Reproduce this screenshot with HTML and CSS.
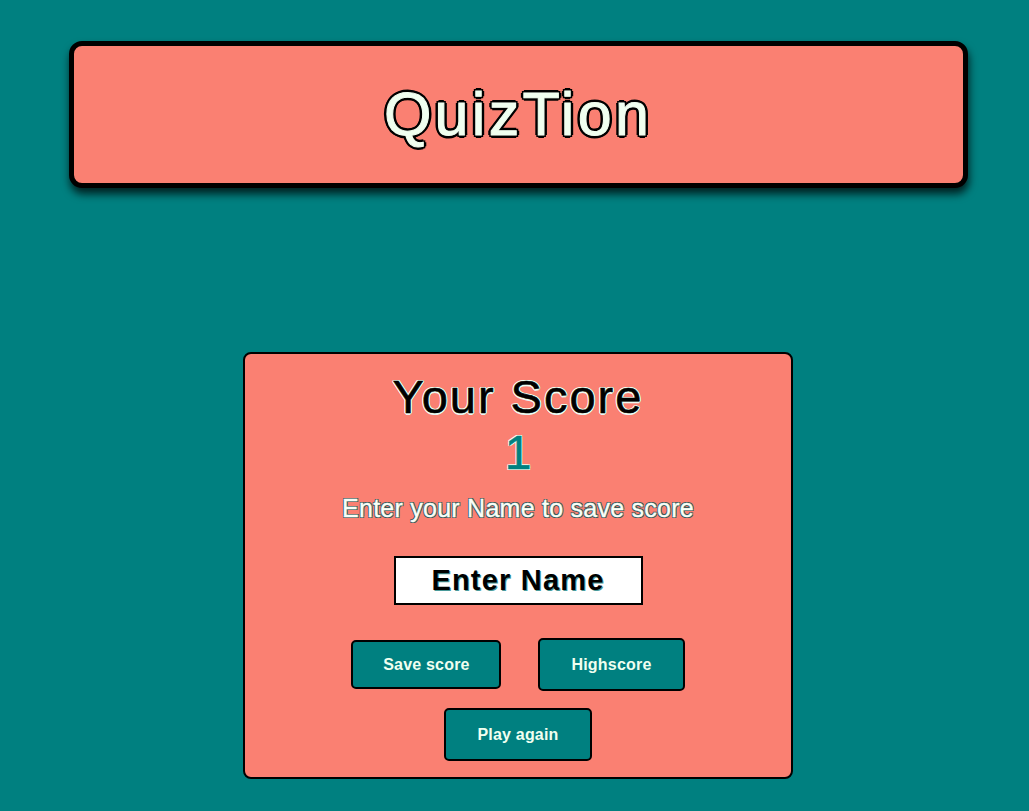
FILE: index.html
```html
<!DOCTYPE html>
<html lang="en">
<head>
<meta charset="utf-8">
<title>QuizTion</title>
<link rel="stylesheet" href="styles.css">
</head>
<body>
  <header class="banner">
    <h1 class="banner-title">QuizTion</h1>
  </header>
  <main class="card">
    <h2 class="score-title">Your Score</h2>
    <div class="score-value">1</div>
    <p class="score-hint">Enter your Name to save score</p>
    <input class="name-input" type="text" placeholder="Enter Name">
    <div class="btn-row">
      <button class="btn btn-save">Save score</button>
      <button class="btn">Highscore</button>
    </div>
    <div class="btn-row btn-row-last">
      <button class="btn">Play again</button>
    </div>
  </main>
</body>
</html>
```
FILE: styles.css
```css
html, body {
  margin: 0;
  padding: 0;
}
body {
  background: #008080;
  font-family: "Liberation Sans", Arial, sans-serif;
  min-height: 811px;
  padding: 41px 0 0 7px;
  box-sizing: border-box;
}
.banner {
  width: 899px;
  height: 147px;
  margin: 0 auto;
  box-sizing: border-box;
  background: #fa8072;
  border: 5px solid #000;
  border-radius: 13px;
  box-shadow: 1px 6px 8px rgba(0, 0, 0, 0.75);
  display: flex;
  align-items: center;
  justify-content: center;
}
.banner-title {
  margin: 0;
  font-size: 61px;
  font-weight: normal;
  line-height: 1;
  letter-spacing: 3.3px;
  color: #f0fff0;
  padding-top: 0;
  -webkit-text-stroke: 1px #f0fff0;
  text-shadow:
    -2px -2px 0 #000, 2px -2px 0 #000, -2px 2px 0 #000, 2px 2px 0 #000,
    0 -2px 0 #000, 0 2px 0 #000, -2px 0 0 #000, 2px 0 0 #000,
    0 -3px 0 #000, 0 3px 0 #000, -3px 0 0 #000, 3px 0 0 #000;
}
.card {
  width: 550px;
  margin: 164px auto 0;
  box-sizing: border-box;
  background: #fa8072;
  border: 2px solid #000;
  border-radius: 8px;
  padding: 19px 0 16px;
  display: flex;
  flex-direction: column;
  align-items: center;
  text-align: center;
}
.score-title {
  margin: 0;
  font-size: 47px;
  font-weight: normal;
  line-height: 48px;
  letter-spacing: 2px;
  color: #000;
  -webkit-text-stroke: 0.6px #000;
  text-shadow:
    -1px -1px 0 #f0fff0, 1px -1px 0 #f0fff0, -1px 1px 0 #f0fff0, 1px 1px 0 #f0fff0,
    0 -1.5px 0 #e8f8f8, 0 1.5px 0 #e8f8f8, -1.5px 0 0 #e8f8f8, 1.5px 0 0 #e8f8f8;
}
.score-value {
  margin-top: 8px;
  font-size: 48px;
  line-height: 48px;
  color: #008080;
  -webkit-text-stroke: 0.6px #008080;
  text-shadow:
    -1px -1px 0 #f0fff0, 1px -1px 0 #f0fff0, -1px 1px 0 #f0fff0, 1px 1px 0 #f0fff0;
}
.score-hint {
  margin: 16px 0 0;
  font-size: 25px;
  line-height: 30px;
  letter-spacing: 0.25px;
  color: #f8fff8;
  -webkit-text-stroke: 0.4px #f8fff8;
  text-shadow:
    -1px -1px 0 #3a5a5a, 1px -1px 0 #3a5a5a, -1px 1px 0 #3a5a5a, 1px 1px 0 #3a5a5a;
}
.name-input {
  margin-top: 33px;
  width: 249px;
  height: 49px;
  box-sizing: border-box;
  border: 2px solid #000;
  border-radius: 0;
  background: #fff;
  font-family: "Liberation Sans", Arial, sans-serif;
  font-size: 29px;
  font-weight: bold;
  letter-spacing: 1.2px;
  text-align: center;
  padding: 0;
  outline: none;
}
.name-input::placeholder {
  color: #000;
  opacity: 1;
  text-shadow: 1px 1px 0 #4a9a9a;
}
.btn-row {
  margin-top: 33px;
  display: flex;
  justify-content: center;
  align-items: center;
  gap: 37px;
}
.btn-row-last {
  margin-top: 17px;
}
.btn {
  height: 53px;
  padding: 0 31px;
  box-sizing: border-box;
  background: #008080;
  border: 2px solid #000;
  border-radius: 5px;
  color: #f0fff0;
  font-family: "Liberation Sans", Arial, sans-serif;
  font-size: 16px;
  font-weight: bold;
  letter-spacing: 0.2px;
  cursor: pointer;
}
.btn-save {
  height: 49px;
  width: 150px;
  padding: 0;
}
```
